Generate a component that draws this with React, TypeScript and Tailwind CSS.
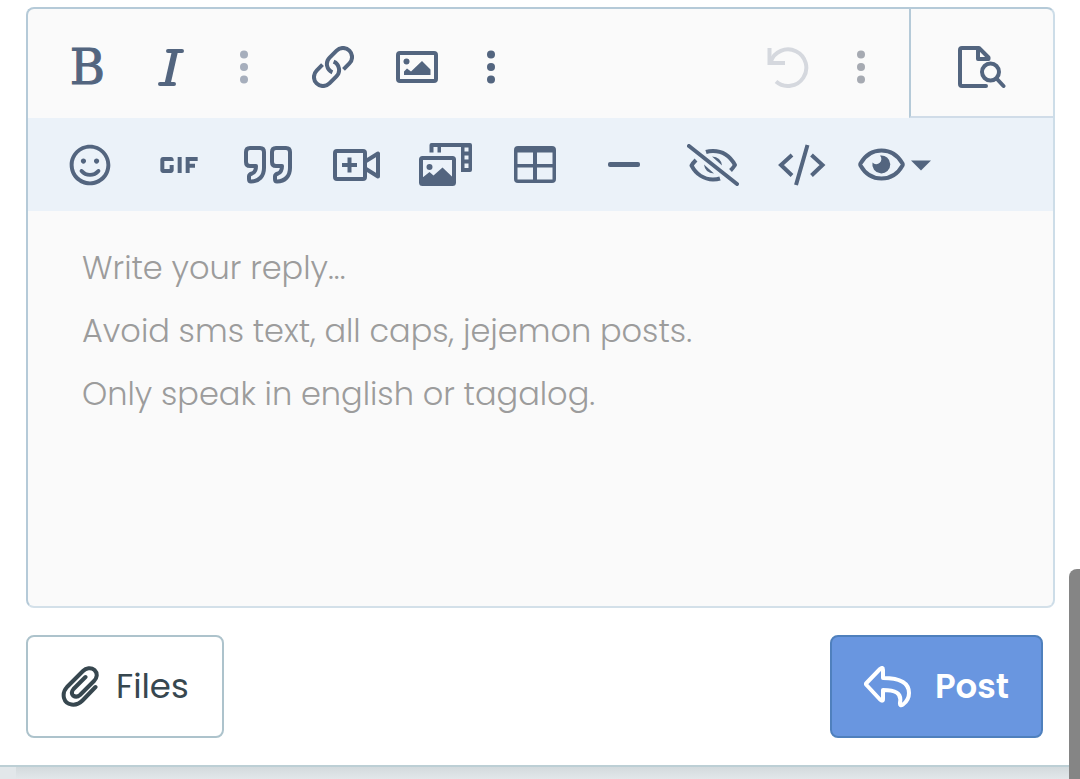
import type { ReactNode } from "react";
import { FaRegSmile } from "react-icons/fa";
import { MdGif } from "react-icons/md";

const PLACEHOLDER = [
  "Write your reply...",
  "Avoid sms text, all caps, jejemon posts.",
  "Only speak in english or tagalog.",
].join("\n");

function Icon({ w, h, stroke = 4, children }: { w: number; h: number; stroke?: number; children: ReactNode }) {
  return (
    <svg
      width={w}
      height={h}
      viewBox={`0 0 ${w} ${h}`}
      fill="none"
      stroke="currentColor"
      strokeWidth={stroke}
      strokeLinecap="round"
      strokeLinejoin="round"
      aria-hidden="true"
      className="shrink-0"
    >
      {children}
    </svg>
  );
}

function ToolButton({ label, className = "w-[89px]", children }: { label: string; className?: string; children: ReactNode }) {
  return (
    <button type="button" aria-label={label} className={`flex shrink-0 items-center justify-center ${className}`}>
      {children}
    </button>
  );
}

function Dots() {
  return (
    <Icon w={8} h={34}>
      <g fill="currentColor" stroke="none">
        <circle cx="4" cy="4.5" r="4" />
        <circle cx="4" cy="17" r="4" />
        <circle cx="4" cy="29.5" r="4" />
      </g>
    </Icon>
  );
}

function LinkIcon() {
  const half = "M10.5 18.7 4.6 24.6A9 9 0 0 0 17.4 37.4L24.4 30.4A9 9 0 0 0 21.6 15.7";
  return (
    <Icon w={42} h={42}>
      <path d={half} strokeLinecap="butt" />
      <path d={half} strokeLinecap="butt" transform="rotate(180 21 21)" />
    </Icon>
  );
}

function ImageIcon() {
  return (
    <Icon w={42} h={32}>
      <rect x="2" y="2" width="38" height="28" rx="2" />
      <circle cx="10.5" cy="10.5" r="3" fill="currentColor" stroke="none" />
      <path d="M8 24v-3.5l3-3 4 3L26 10l8.5 8.5V24Z" fill="currentColor" stroke="none" />
    </Icon>
  );
}

function UndoIcon() {
  return (
    <Icon w={42} h={41}>
      <path d="M2.5 1v15H18" strokeLinecap="butt" strokeLinejoin="miter" />
      <path d="M3.6 15A18.3 18.3 0 1 1 9 34.5" strokeLinecap="butt" />
    </Icon>
  );
}

function PreviewIcon() {
  return (
    <Icon w={48} h={43}>
      <path d="M28 40H4q-2 0-2-2V4q0-2 2-2h17l9.500 9.500V13H20V2" />
      <circle cx="32.500" cy="26" r="8.500" />
      <path d="m39 33 6.500 7" />
    </Icon>
  );
}

function QuoteIcon() {
  const mark =
    "M6 2H16Q20 2 20 6V22C20 30 15 35.500 7 35.500Q5 35.500 5 33V30.500Q5 28.500 8 27.500Q12 26 12 20H6Q2 20 2 16V6Q2 2 6 2Z";
  return (
    <Icon w={48} h={38}>
      <path d={mark} />
      <path d={mark} transform="translate(26 0)" />
    </Icon>
  );
}

function VideoIcon() {
  return (
    <Icon w={48} h={32}>
      <rect x="2" y="2" width="30" height="28" rx="2" />
      <path d="M9 16h15M16.500 8.500v15" strokeLinecap="butt" />
      <path d="m33 12 12-7.500v23L33 20" />
    </Icon>
  );
}

function GalleryIcon() {
  return (
    <Icon w={53} h={43}>
      <rect x="2" y="15" width="33" height="26" rx="1.500" />
      <circle cx="10.500" cy="24" r="3" fill="currentColor" stroke="none" />
      <path d="m3 35 7.500-6 4 3.500 9-8 11 10.500v6H3Z" fill="currentColor" stroke="none" />
      <path
        d="M12.500 0H51q2 0 2 2v25q0 2-2 2h-9V4H22v5.500h-3.500V4H14.500v5.500H10.500V2q0-2 2-2ZM45.500 4.500v4H49.500v-4ZM45.500 12.500v4H49.500v-4ZM45.500 20.500v4.500H49.500v-4.500Z"
        fill="currentColor"
        fillRule="evenodd"
        stroke="none"
      />
    </Icon>
  );
}

function TableIcon() {
  return (
    <Icon w={42} h={37}>
      <path
        d="M4 0h34q4 0 4 4v29q0 4-4 4H4q-4 0-4-4V4q0-4 4-4ZM3.500 6.500V18H19V6.500ZM23 6.500V18h15.500V6.500ZM3.500 21.500v12H19v-12ZM23 21.500v12h15.500v-12Z"
        fill="currentColor"
        fillRule="evenodd"
        stroke="none"
      />
    </Icon>
  );
}

function SpoilerIcon() {
  return (
    <Icon w={52} h={42}>
      <path d="m2 2 48 38" />
      <path
        d="M9 16Q6 19 4.500 21.500C9 30 17 35.500 26 35.500Q30 35.500 33 34.500M19 8Q22 7 26 7C35 7 43 12 48 21Q46 24 43.500 26.500"
        strokeLinecap="butt"
      />
      <path d="M25 12.500Q34 13 35 21.500ZM17 20.500Q18 29 27 29.500Z" fill="currentColor" stroke="none" />
    </Icon>
  );
}

function CodeIcon() {
  return (
    <Icon w={48} h={42}>
      <path d="M29.500 1 18 41M14 11 3 21l11 10.500M33.500 11l11 10-11 10.500" strokeLinecap="butt" strokeLinejoin="miter" />
    </Icon>
  );
}

function ToggleIcon() {
  return (
    <Icon w={74} h={33}>
      <path d="M2.500 15.500C7 7.500 14.500 2.500 23.500 2.500S40 7.500 44.500 15.500q.5 1 0 2C40 25.500 32.500 30.500 23.500 30.500S7 25.500 2.500 17.500q-.5-1 0-2Z" />
      <path d="M22 7.500A9 9 0 1 1 14.500 14.500 4.500 4.500 0 0 0 22 7.500Z" fill="currentColor" stroke="none" />
      <path d="M53 12.500h20L63 22.500Z" fill="currentColor" stroke="none" />
    </Icon>
  );
}

function ClipIcon() {
  return (
    <Icon w={38} h={41}>
      <path d="M34.500 21 21.500 34.500C15 41 5 39.500 3 32Q1.500 26 6 21L22 5C25 2 30 1 33.500 4 37 7.500 36 12 33 15L19 29Q15.500 32 12 29.500 9.500 26.500 12.500 23L24.500 11" />
    </Icon>
  );
}

function ReplyIcon() {
  return (
    <Icon w={47} h={42}>
      <path d="M2.500 17 16 3q3-2.500 3 1v8C35 12 45 16 45 27q0 7-6 11.500-3.500 2-3-2C38 27 31 24 19 24v9q0 3-3 .5L2.500 19q-1-1 0-2Z" />
    </Icon>
  );
}

export default function App() {
  return (
    <div className="relative flex min-h-screen flex-col overflow-hidden bg-[#e2e7ea] font-['Poppins','Inter',sans-serif]">
      <main className="border-b-2 border-[#bccfd5] bg-white pt-[7px] pr-[25px] pb-[27px] pl-[26px]">
        <section className="overflow-hidden rounded-lg border-2 border-t-[#b5cad8] border-r-[#cddde8] border-b-[#d3e0e9] border-l-[#b5cad8] bg-[#fafafa] text-[#53657f]">
          <div className="flex h-[109px]">
            <div role="toolbar" aria-label="Formatting" className="flex flex-1 pt-[7px] pr-[17px] pl-[18px]">
              <ToolButton label="Bold" className="w-[83px]">
                <span className="font-['DejaVu_Serif',serif] text-[48px] leading-[50px] [-webkit-text-stroke:1px]">B</span>
              </ToolButton>
              <ToolButton label="Italic" className="w-[83px]">
                <Icon w={26} h={37} stroke={4}>
                  <path d="M10 2h14M2 35h14" />
                  <path d="M17 2 9.500 35" strokeWidth="6" strokeLinecap="butt" />
                </Icon>
              </ToolButton>
              <ToolButton label="More text options" className="w-[63px] text-[#a6aebc]">
                <Dots />
              </ToolButton>
              <ToolButton label="Insert link" className="ml-4 w-[84px]">
                <LinkIcon />
              </ToolButton>
              <ToolButton label="Insert image" className="w-[84px]">
                <ImageIcon />
              </ToolButton>
              <ToolButton label="More insert options" className="w-[64px]">
                <Dots />
              </ToolButton>
              <ToolButton label="Undo" className="ml-auto w-[84px] text-[#d5d8de]">
                <UndoIcon />
              </ToolButton>
              <ToolButton label="More options" className="w-[62px] text-[#a6aab2]">
                <Dots />
              </ToolButton>
            </div>
            <ToolButton label="Preview" className="w-[144px] border-b-2 border-l-2 border-b-[#d0dce8] border-l-[#b5cad8] pt-[9px]">
              <PreviewIcon />
            </ToolButton>
          </div>

          <div role="toolbar" aria-label="Insert" className="flex h-[93px] bg-[#ebf2f9] pl-[17px]">
            <ToolButton label="Smilies">
              <FaRegSmile size={42} />
            </ToolButton>
            <ToolButton label="GIF">
              <MdGif size={64} />
            </ToolButton>
            <ToolButton label="Quote">
              <QuoteIcon />
            </ToolButton>
            <ToolButton label="Insert video">
              <VideoIcon />
            </ToolButton>
            <ToolButton label="Gallery embed">
              <GalleryIcon />
            </ToolButton>
            <ToolButton label="Insert table">
              <TableIcon />
            </ToolButton>
            <ToolButton label="Horizontal line">
              <span className="h-[5px] w-8 rounded-xs bg-current" />
            </ToolButton>
            <ToolButton label="Spoiler">
              <SpoilerIcon />
            </ToolButton>
            <ToolButton label="Code">
              <CodeIcon />
            </ToolButton>
            <ToolButton label="Visibility" className="px-3">
              <ToggleIcon />
            </ToolButton>
          </div>

          <textarea
            aria-label="Reply"
            placeholder={PLACEHOLDER}
            className="block h-[395px] w-full resize-none px-[54px] py-[25px] text-[32px] leading-[63px] font-light text-[#37474f] outline-none placeholder:text-[#9c9c9c]"
          />
        </section>

        <div className="mt-[27px] mr-3 flex items-center justify-between">
          <button
            type="button"
            className="flex h-[103px] items-center gap-[17px] rounded-lg border-2 border-[#adc3cc] px-[33px] text-[34px] text-[#37474f]"
          >
            <ClipIcon />
            Files
          </button>
          <button
            type="submit"
            className="flex h-[103px] items-center gap-6 rounded-lg border-2 border-[#4f80bd] bg-[#6996e0] px-8 text-[34px] font-semibold text-white"
          >
            <ReplyIcon />
            Post
          </button>
        </div>
      </main>

      {/* Shadow cast on the page below */}
      <div className="ml-4 h-3 bg-linear-to-b from-[#d3dadd] to-[#e2e7ea]" />

      {/* Scrollbar thumb */}
      <div className="absolute top-[569px] right-0 bottom-0 w-[11px] rounded-tl-lg bg-[#858585]" />
    </div>
  );
}
